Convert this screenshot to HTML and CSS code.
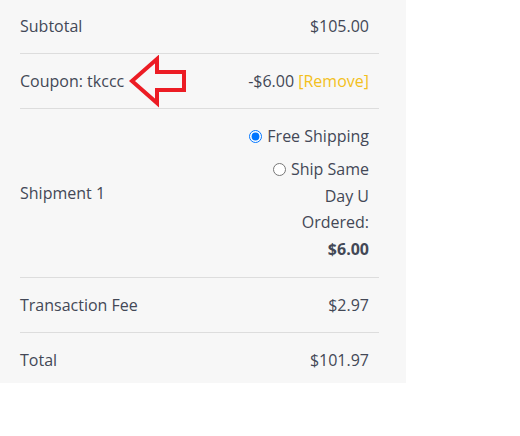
FILE: index.html
```html
<!DOCTYPE html>
<html lang="en">
<head>
    <meta charset="UTF-8">
    <meta name="viewport" content="width=device-width, initial-scale=1.0">
    <title>Order Summary</title>
    <link rel="stylesheet" href="styles.css">
</head>
<body>
    <div class="summary">
        <table class="totals">
            <tbody>
                <tr>
                    <td class="label">Subtotal</td>
                    <td class="value">$105.00</td>
                </tr>
                <tr>
                    <td class="label">Coupon: tkccc</td>
                    <td class="value nowrap">-$6.00 <a class="remove" href="#">[Remove]</a></td>
                </tr>
                <tr>
                    <td class="label">Shipment 1</td>
                    <td class="value ship-cell">
                        <ul class="ship-options">
                            <li><label><input type="radio" name="ship" checked>Free Shipping</label></li>
                            <li class="narrow"><label><input type="radio" name="ship">Ship Same Day U Ordered: <strong>$6.00</strong></label></li>
                        </ul>
                    </td>
                </tr>
                <tr>
                    <td class="label">Transaction Fee</td>
                    <td class="value">$2.97</td>
                </tr>
                <tr class="last">
                    <td class="label">Total</td>
                    <td class="value">$101.97</td>
                </tr>
            </tbody>
        </table>

        <!-- annotation arrow -->
        <svg class="arrow" width="62" height="54" viewBox="0 0 62 54">
            <polygon points="5,26 30,4 30,17 57,17 57,35 30,35 30,48" fill="none" stroke="#ec1c24" stroke-width="4" stroke-linejoin="miter"/>
        </svg>
    </div>
</body>
</html>
```

FILE: styles.css
```css
body {
    margin: 0;
    font-family: 'Open Sans', 'Liberation Sans', sans-serif;
    background-color: white;
}

.summary {
    position: relative;
    width: 359px;
    margin-top: -1px;
    padding: 0 27px 0 20px;
    background-color: #f7f7f7;
    color: #434856;
    font-size: 16px;
}

.totals {
    width: 100%;
    border-collapse: collapse;
}

.totals td {
    padding: 15px 0;
    line-height: 24px;
    border-bottom: 1px solid #dddddd;
    vertical-align: middle;
}

.totals tr.last td {
    border-bottom: none;
    padding-bottom: 11px;
}

.totals .value {
    width: 125px;
    padding-right: 10px;
    text-align: right;
}

.totals .ship-cell {
    padding-top: 14px;
    padding-bottom: 15px;
}

.nowrap {
    white-space: nowrap;
}

.remove {
    color: #f3c020;
    text-decoration: none;
}

.ship-options {
    display: flex;
    flex-direction: column;
    align-items: flex-end;
    list-style: none;
    margin: 0;
    padding: 0;
}

.ship-options li {
    line-height: 26.4px;
}

.ship-options li + li {
    margin-top: 7px;
}

.ship-options li.narrow {
    max-width: 105px;
}

.ship-options input {
    width: 13px;
    height: 13px;
    margin: 0 5px 0 0;
    vertical-align: -1px;
}

.arrow {
    position: absolute;
    left: 127px;
    top: 56px;
}
```
